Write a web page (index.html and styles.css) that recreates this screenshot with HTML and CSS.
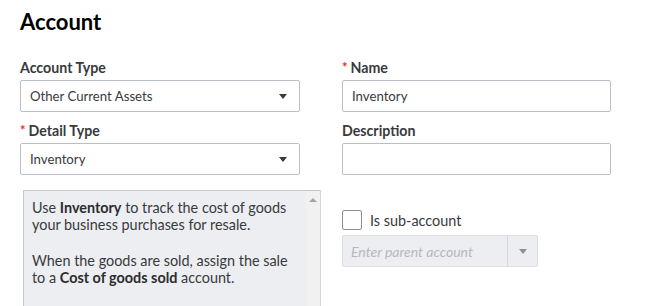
FILE: index.html
```html
<!DOCTYPE html>
<html lang="en">
<head>
    <meta charset="UTF-8">
    <title>Account</title>
    <link rel="stylesheet" href="styles.css">
</head>
<body>
    <h1 class="page-title">Account</h1>
    <div class="form">
        <div class="col col-left">
            <div class="field">
                <label class="label">Account Type</label>
                <div class="select">
                    <span class="select-value">Other Current Assets</span>
                    <span class="caret"></span>
                </div>
            </div>
            <div class="field">
                <label class="label"><span class="req">*</span>Detail Type</label>
                <div class="select">
                    <span class="select-value">Inventory</span>
                    <span class="caret"></span>
                </div>
            </div>
            <div class="help-box">
                <div class="help-text">
                    <p>Use <b>Inventory</b> to track the cost of goods your business purchases for resale.</p>
                    <p>When the goods are sold, assign the sale to a <b>Cost of goods sold</b> account.</p>
                </div>
                <div class="scrollbar"><span class="scroll-up"></span></div>
            </div>
        </div>
        <div class="col col-right">
            <div class="field">
                <label class="label"><span class="req">*</span>Name</label>
                <div class="input">Inventory</div>
            </div>
            <div class="field">
                <label class="label">Description</label>
                <div class="input"></div>
            </div>
            <div class="sub-account">
                <span class="checkbox"></span>
                <span class="check-label">Is sub-account</span>
            </div>
            <div class="parent-select">
                <span class="placeholder">Enter parent account</span>
                <span class="parent-btn"><span class="caret caret-light"></span></span>
            </div>
        </div>
    </div>
</body>
</html>
```

FILE: styles.css
```css
/* Reset */
body, h1, p {
    margin: 0;
    padding: 0;
}

body {
    font-family: Lato, "Open Sans", Arial, sans-serif;
    color: #393a3d;
    background-color: #fff;
    padding: 8px 20px 0 20px;
    overflow: hidden;
}

.page-title {
    font-size: 22px;
    line-height: 28px;
    font-weight: 700;
    color: #000;
    margin-bottom: 22px;
}

.form {
    display: flex;
    gap: 42px;
}

.col-left {
    width: 280px;
}

.col-right {
    width: 269px;
}

.field {
    margin-bottom: 9px;
}

.label {
    display: block;
    font-size: 14.2px;
    font-weight: 700;
    line-height: 20px;
    margin-bottom: 2px;
}

.req {
    color: #e0301e;
    font-size: 13px;
    margin-right: 3px;
    position: relative;
    top: -1px;
}

.select,
.input {
    box-sizing: border-box;
    height: 32px;
    border: 1px solid #babec5;
    border-radius: 2px;
    display: flex;
    align-items: center;
    padding: 0 9px;
    font-size: 13.2px;
}

.select {
    justify-content: space-between;
    padding-right: 12px;
}

.caret {
    width: 0;
    height: 0;
    border-left: 4px solid transparent;
    border-right: 4px solid transparent;
    border-top: 5px solid #393a3d;
}

.caret-light {
    border-top-color: #8d9096;
}

/* Detail type help box */
.help-box {
    display: flex;
    box-sizing: border-box;
    width: 298px;
    height: 130px;
    margin: 15px 0 0 3px;
    border: 1px solid #c7c9cd;
    border-bottom: none;
    border-right: 1px solid #d4d7dc;
    background-color: #eceef1;
}

.help-text {
    flex: 1;
    padding: 9px 8px;
    font-size: 14.4px;
    line-height: 16.5px;
}

.help-text p {
    margin-bottom: 20px;
}

.help-text b {
    font-weight: 700;
    color: #2c2c2e;
}

.scrollbar {
    width: 14px;
    background-color: #f1f1f1;
    display: flex;
    justify-content: center;
    padding-top: 7px;
}

.scroll-up {
    width: 0;
    height: 0;
    border-left: 4px solid transparent;
    border-right: 4px solid transparent;
    border-bottom: 4px solid #a3a3a3;
}

/* Sub-account */
.sub-account {
    display: flex;
    align-items: center;
    margin-top: 35px;
    height: 20px;
}

.checkbox {
    box-sizing: border-box;
    width: 20px;
    height: 20px;
    border: 1px solid #8d9096;
    border-radius: 2px;
    margin-right: 8px;
}

.check-label {
    font-size: 14.4px;
}

.parent-select {
    box-sizing: border-box;
    width: 196px;
    height: 32px;
    margin-top: 5px;
    display: flex;
    border: 1px solid #dcdee2;
    border-radius: 2px;
    background-color: #eceef1;
}

.placeholder {
    flex: 1;
    display: flex;
    align-items: center;
    padding-left: 8px;
    font-size: 14px;
    font-style: italic;
    color: #b5b8bd;
}

.parent-btn {
    width: 29px;
    border-left: 1px solid #d4d7dc;
    display: flex;
    align-items: center;
    justify-content: center;
}
```
